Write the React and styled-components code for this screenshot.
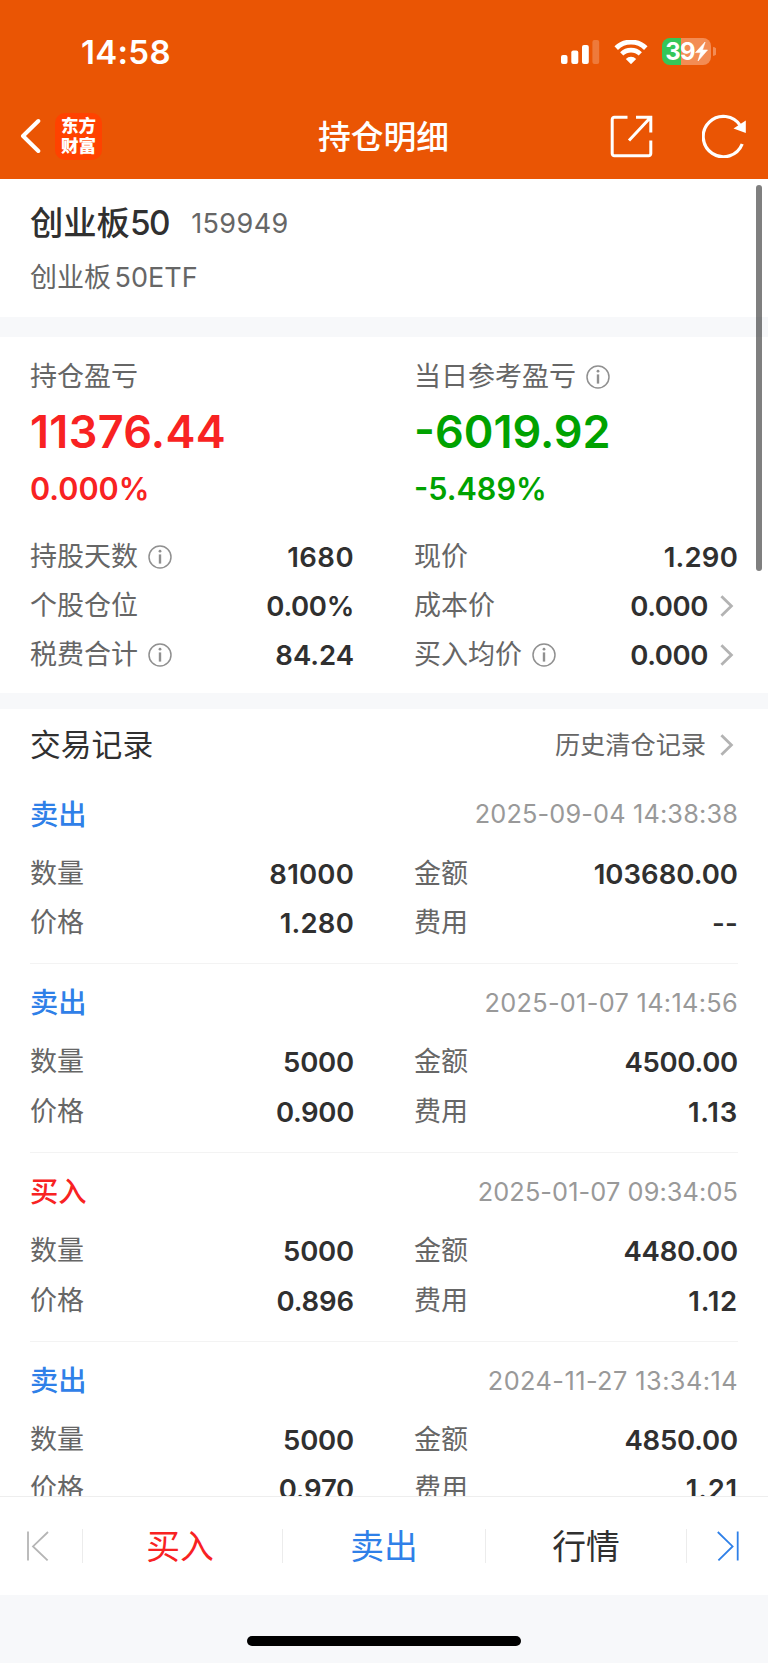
import React from "react";

import styled, { createGlobalStyle, css } from "styled-components";

const GlobalStyle = createGlobalStyle`
  * {
    box-sizing: border-box;
  }

  body {
    margin: 0;
    background: #f7f8fa;
    font-family: Inter, "Noto Sans CJK SC", sans-serif;
    color: #333;
  }

  svg {
    display: block;
    flex: none;
  }
`;

const colors = {
  red: "#f82222",
  green: "#00a200",
  blue: "#2f80e8",
  dark: "#303030",
};

const Screen = styled.div`
  display: flex;
  flex-direction: column;
  position: relative;
  width: 768px;
  height: 1663px;
  overflow: hidden;
  background: #f7f8fa;
`;

const Header = styled.header`
  flex: none;
  height: 179px;
  background: #ea5504;
  color: #fff;
`;

const StatusBar = styled.div`
  display: flex;
  align-items: center;
  height: 103px;
  padding: 0 52px 0 81px;
`;

const Time = styled.div`
  flex: 1;
  font-size: 33px;
  font-weight: 600;
  letter-spacing: 0.3px;
`;

const StatusIcons = styled.div`
  display: flex;
  align-items: center;
  gap: 14px;
`;

const Battery = styled.div`
  display: flex;
  align-items: center;
  gap: 2px;
`;

const BatteryBody = styled.div`
  display: flex;
  align-items: center;
  justify-content: center;
  width: 49px;
  height: 27px;
  border-radius: 8px;
  background: linear-gradient(90deg, #34c759 39%, #f38c54 39%);
  font-size: 24px;
  font-weight: 700;
  line-height: 27px;
  letter-spacing: -0.9px;
`;

const NavBar = styled.div`
  display: grid;
  grid-template-columns: 1fr auto 1fr;
  align-items: center;
  height: 66px;
  padding: 0 22px 0 20px;
`;

const NavLeft = styled.div`
  display: flex;
  align-items: center;
  gap: 14px;
`;

const Logo = styled.div`
  display: flex;
  flex-direction: column;
  align-items: center;
  gap: 2px;
  width: 47px;
  height: 47px;
  padding-top: 3px;
  border-radius: 10px;
  background: #ff4200;
  font-family: "Noto Sans CJK SC", sans-serif;
  font-size: 17.5px;
  font-weight: 900;
  line-height: 18px;
`;

const Title = styled.h1`
  margin: 0;
  padding: 1px 0 0 1px;
  font-size: 32.8px;
  font-weight: 500;
  line-height: 40px;
`;

const NavRight = styled.div`
  display: flex;
  align-items: center;
  justify-content: flex-end;
  gap: 49px;
`;

const Content = styled.main`
  flex: none;
  height: 1317px;
  overflow: hidden;
`;

const Section = styled.section`
  height: ${(props) => props.$height}px;
  margin-bottom: ${(props) => props.$gap || 0}px;
  padding: 0 30px;
  background: #fff;
`;

const StockName = styled.div`
  display: flex;
  align-items: center;
  padding-top: 24px;
  height: 64px;
  line-height: 40px;
  font-size: 33.3px;
  font-weight: 500;
  color: ${colors.dark};

  b {
    font-weight: 500;
    letter-spacing: -1.4px;
  }
`;

const StockCode = styled.span`
  margin-left: 22px;
  padding-top: 1px;
  font-size: 27px;
  font-weight: 400;
  letter-spacing: 0.4px;
  color: #666;
`;

const FullName = styled.div`
  margin-top: 15px;
  font-size: 27px;
  line-height: 40px;
  word-spacing: -4px;
  color: #666;
`;

const Columns = styled.div`
  display: grid;
  grid-template-columns: 324px 324px;
  column-gap: 60px;
`;

const Label = styled.div`
  display: flex;
  align-items: center;
  gap: 10px;
  font-size: 27px;
  line-height: 40px;
  color: #666;
`;

const Profit = styled.div`
  padding-top: 20px;
  color: ${(props) => props.$color};
`;

const Amount = styled.div`
  height: 69px;
  font-size: 45px;
  font-weight: 600;
  line-height: 69px;
  letter-spacing: ${(props) => props.$spacing}em;
`;

const Percent = styled.div`
  height: 46px;
  font-size: 30.6px;
  font-weight: 600;
  line-height: 46px;
`;

const Pairs = styled(Columns)`
  margin-top: ${(props) => props.$top}px;
`;

const Row = styled.div`
  display: flex;
  align-items: center;
  justify-content: space-between;
  height: 49.2px;
`;

const Value = styled.div`
  display: flex;
  align-items: center;
  gap: 12px;
  font-size: 27.5px;
  font-weight: 600;
  letter-spacing: ${(props) => props.$spacing}em;
  color: ${colors.dark};
`;

const RecordsHead = styled.div`
  display: flex;
  align-items: center;
  justify-content: space-between;
  height: 65px;
  padding-top: 7px;
`;

const RecordsTitle = styled.h2`
  margin: 0;
  font-size: 30.8px;
  font-weight: 400;
  line-height: 40px;
  color: ${colors.dark};
`;

const HistoryLink = styled.div`
  display: flex;
  align-items: center;
  gap: 14px;
  font-size: 25.2px;
  line-height: 40px;
  color: #666;
`;

const Record = styled.article`
  height: 188.9px;
  padding-top: 20px;

  & + & {
    padding-top: 19px;
    border-top: 1px solid #f3f3f3;
  }
`;

const RecordHead = styled.div`
  display: flex;
  align-items: center;
  justify-content: space-between;
  height: 40px;
`;

const Side = styled.div`
  padding-bottom: 4px;
  font-size: 28.3px;
  font-weight: 500;
  color: ${(props) => props.$color};
`;

const Stamp = styled.div`
  padding-bottom: 1px;
  font-size: 25.3px;
  letter-spacing: ${(props) => props.$spacing}em;
  color: #999;
`;

const ScrollThumb = styled.div`
  position: absolute;
  top: 185px;
  right: 6px;
  width: 6px;
  height: 386px;
  border-radius: 3px;
  background: rgba(0, 0, 0, 0.5);
`;

const TabBar = styled.nav`
  display: grid;
  grid-template-columns: 83px 200px 203px 201px 81px;
  align-items: center;
  flex: none;
  height: 99px;
  border-top: 1px solid #eee;
  background: #fff;
`;

const Tab = styled.div`
  display: flex;
  align-items: center;
  justify-content: center;
  height: 34px;
  padding-right: ${(props) => props.$shift || 0}px;
  font-size: 33.8px;
  color: ${(props) => props.$color};

  ${(props) =>
    !props.$last &&
    css`
      border-right: 1px solid #ececec;
    `}

  span {
    padding-bottom: 4px;
  }
`;

const HomeArea = styled.footer`
  display: flex;
  justify-content: center;
  flex: 1;
  padding-top: 41px;
`;

const HomeIndicator = styled.div`
  width: 274px;
  height: 10px;
  border-radius: 5px;
  background: #000;
`;

const SignalIcon = () => (
  <svg width="39" height="24" viewBox="0 0 39 24" fill="#fff">
    <rect x="0" y="15" width="6.5" height="9" rx="2" />
    <rect x="10.3" y="10.4" width="7" height="13.6" rx="2" />
    <rect x="21" y="5" width="6.8" height="19" rx="2" />
    <rect x="31.4" y="0" width="6.8" height="24" rx="2" opacity="0.22" />
  </svg>
);

const WifiIcon = () => (
  <svg width="34" height="24" viewBox="0 0 34 24" fill="none" stroke="#fff">
    <path d="M2.2 8.1a21.2 21.2 0 0 1 29.6 0" strokeWidth="5" />
    <path d="M7.7 13.9a13.3 13.3 0 0 1 18.6 0" strokeWidth="4.6" />
    <path d="M17 24.2l-5.2-5.3a7.5 7.5 0 0 1 10.4 0z" fill="#fff" stroke="none" />
  </svg>
);

const BoltIcon = () => (
  <svg width="13" height="19" viewBox="0 0 12 19" fill="#fff">
    <path d="M9.6 0L0 10.6h5L2.5 19 12 8H7z" stroke="#fff" strokeWidth="0.6" />
  </svg>
);

const BackIcon = () => (
  <svg width="21" height="36" viewBox="0 0 21 36" fill="none">
    <path
      d="M18.3 3L3 18l15.3 15"
      stroke="#fff"
      strokeWidth="4"
      strokeLinecap="round"
      strokeLinejoin="round"
    />
  </svg>
);

const ShareIcon = () => (
  <svg width="43" height="43" viewBox="0 0 43 43" fill="none" stroke="#fff" strokeWidth="3">
    <path d="M17.5 2.2H4.4a2.2 2.2 0 0 0-2.2 2.2v34.2a2.2 2.2 0 0 0 2.2 2.2h34.2a2.2 2.2 0 0 0 2.2-2.2V25.5" />
    <path d="M26 2.2h14.8v15.4M40 3L19 25.5" />
  </svg>
);

const ReloadIcon = () => (
  <svg width="44" height="44" viewBox="0 0 44 44" fill="none">
    <path d="M40.2 30A20.2 20.2 0 1 1 38.5 11.8" stroke="#fff" strokeWidth="3.2" />
    <path d="M43.8 6.5V19L31.5 14.6z" fill="#fff" />
  </svg>
);

const InfoIcon = () => (
  <svg width="24" height="24" viewBox="0 0 24 24" fill="none" stroke="#909090">
    <circle cx="12" cy="12" r="11" strokeWidth="1.5" />
    <path d="M12 9.4v9.2" strokeWidth="2.4" />
    <circle cx="12" cy="6.2" r="1.4" fill="#909090" stroke="none" />
  </svg>
);

const ChevronIcon = () => (
  <svg width="18" height="22" viewBox="0 0 18 22" fill="none">
    <path d="M1.4 1.2L11.4 11l-10 9.8" stroke="#b3b3b3" strokeWidth="2.8" />
  </svg>
);

const FirstIcon = () => (
  <svg width="22" height="30" viewBox="0 0 22 30" fill="none" stroke="#b5b5b5" strokeWidth="1.8">
    <path d="M1 .5v29M21 1L6 15.4 20.6 29.4" />
  </svg>
);

const LastIcon = () => (
  <svg width="22" height="30" viewBox="0 0 22 30" fill="none" stroke={colors.blue} strokeWidth="1.8">
    <path d="M20.7 .5v29M.8 1L15.6 15.4 1.4 29.4" />
  </svg>
);

const SELL = { name: "卖出", color: colors.blue };
const BUY = { name: "买入", color: colors.red };

const summary = [
  { label: "持股天数", info: true, value: "1680" },
  { label: "现价", value: "1.290" },
  { label: "个股仓位", value: "0.00%" },
  { label: "成本价", value: "0.000", more: true },
  { label: "税费合计", info: true, value: "84.24" },
  { label: "买入均价", info: true, value: "0.000", more: true },
];

const records = [
  { side: SELL, time: "2025-09-04 14:38:38", count: "81000", total: "103680.00", price: "1.280", fee: "--" },
  { side: SELL, time: "2025-01-07 14:14:56", count: "5000", total: "4500.00", price: "0.900", fee: "1.13" },
  { side: BUY, time: "2025-01-07 09:34:05", count: "5000", total: "4480.00", price: "0.896", fee: "1.12" },
  { side: SELL, time: "2024-11-27 13:34:14", count: "5000", total: "4850.00", price: "0.970", fee: "1.21" },
];

// evens out the narrow 1 and the wide 0 of the proportional figures
const count = (text, char) => text.split(char).length - 1;
const tracking = (text) =>
  0.006 +
  (0.06 * count(text, "1") - 0.018 * count(text, "0") - 0.035 * count(text, ".")) / text.length;

const Pair = ({ label, value, info, more }) => (
  <Row>
    <Label>
      {label}
      {info && <InfoIcon />}
    </Label>
    <Value $spacing={tracking(value)}>
      {value}
      {more && <ChevronIcon />}
    </Value>
  </Row>
);

const App = () => {
  return (
    <>
      <GlobalStyle />
      <Screen>
        <Header>
          <StatusBar>
            <Time>14:58</Time>
            <StatusIcons>
              <SignalIcon />
              <WifiIcon />
              <Battery>
                <BatteryBody>
                  39
                  <BoltIcon />
                </BatteryBody>
                <svg width="3" height="9" viewBox="0 0 3 9">
                  <path d="M0 0a4.5 4.5 0 0 1 0 9z" fill="#f38c54" />
                </svg>
              </Battery>
            </StatusIcons>
          </StatusBar>
          <NavBar>
            <NavLeft>
              <BackIcon />
              <Logo>
                <span>东方</span>
                <span>财富</span>
              </Logo>
            </NavLeft>
            <Title>持仓明细</Title>
            <NavRight>
              <ShareIcon />
              <ReloadIcon />
            </NavRight>
          </NavBar>
        </Header>

        <Content>
          <Section $height={138} $gap={20}>
            <StockName>
              创业板<b>50</b>
              <StockCode>159949</StockCode>
            </StockName>
            <FullName>创业板 50ETF</FullName>
          </Section>

          <Section $height={356} $gap={16}>
            <Columns>
              <Profit $color={colors.red}>
                <Label>持仓盈亏</Label>
                <Amount $spacing={0.007}>11376.44</Amount>
                <Percent>0.000%</Percent>
              </Profit>
              <Profit $color={colors.green}>
                <Label>
                  当日参考盈亏
                  <InfoIcon />
                </Label>
                <Amount $spacing={0}>-6019.92</Amount>
                <Percent>-5.489%</Percent>
              </Profit>
            </Columns>
            <Pairs $top={20}>
              {summary.map((item) => (
                <Pair key={item.label} {...item} />
              ))}
            </Pairs>
          </Section>

          <Section $height={900}>
            <RecordsHead>
              <RecordsTitle>交易记录</RecordsTitle>
              <HistoryLink>
                历史清仓记录
                <ChevronIcon />
              </HistoryLink>
            </RecordsHead>
            {records.map((record) => (
              <Record key={record.time}>
                <RecordHead>
                  <Side $color={record.side.color}>{record.side.name}</Side>
                  <Stamp $spacing={tracking(record.time)}>{record.time}</Stamp>
                </RecordHead>
                <Pairs $top={15}>
                  <Pair label="数量" value={record.count} />
                  <Pair label="金额" value={record.total} />
                  <Pair label="价格" value={record.price} />
                  <Pair label="费用" value={record.fee} />
                </Pairs>
              </Record>
            ))}
          </Section>
        </Content>
        <ScrollThumb />

        <TabBar>
          <Tab $shift={6}>
            <FirstIcon />
          </Tab>
          <Tab $color={colors.red} $shift={5}>
            <span>买入</span>
          </Tab>
          <Tab $color={colors.blue}>
            <span>卖出</span>
          </Tab>
          <Tab $color={colors.dark}>
            <span>行情</span>
          </Tab>
          <Tab $last>
            <LastIcon />
          </Tab>
        </TabBar>
        <HomeArea>
          <HomeIndicator />
        </HomeArea>
      </Screen>
    </>
  );
};

export default App;
